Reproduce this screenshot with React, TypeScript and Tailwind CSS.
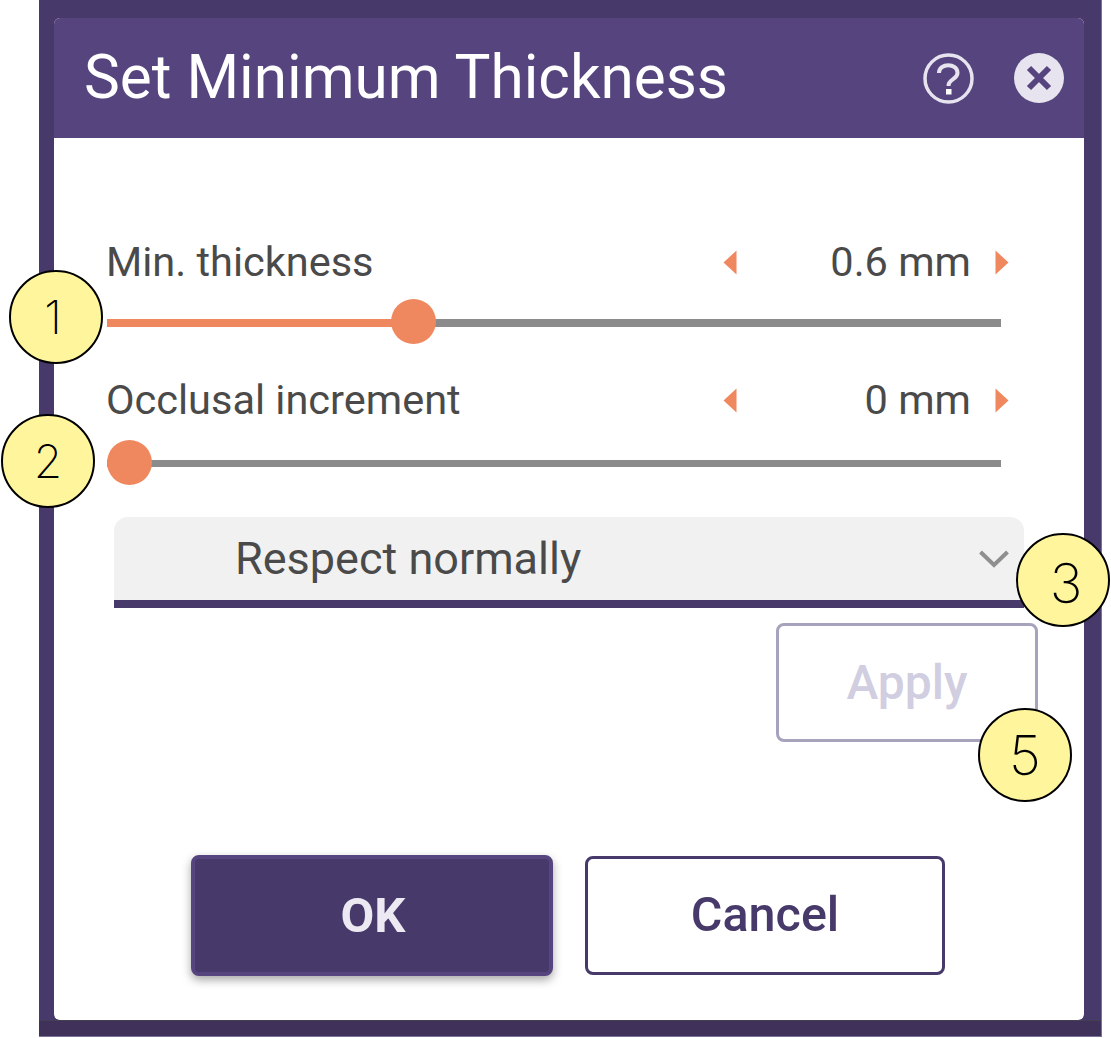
import React from 'react'

const font = { fontFamily: 'Roboto, "Liberation Sans", sans-serif' }

function LeftArrow() {
  return (
    <svg width="15" height="25" viewBox="0 0 15 25" className="block shrink-0">
      <path d="M0.5 12.5 L13.5 0.5 V24.5 Z" fill="#f0885f" />
    </svg>
  )
}

function RightArrow() {
  return (
    <svg width="14" height="25" viewBox="0 0 14 25" className="block shrink-0">
      <path d="M13.5 12.5 L0.5 0.5 V24.5 Z" fill="#f0885f" />
    </svg>
  )
}

function ValueRow({ label, value }: { label: string; value: string }) {
  return (
    <div className="flex h-[44px] w-[902px] items-center text-[41.5px] leading-[44px] text-[#4a4a4a]">
      <div className="-ml-px flex-1 whitespace-nowrap">{label}</div>
      <LeftArrow />
      <div className="w-[233px] whitespace-nowrap text-right">{value}</div>
      <div className="ml-[24px]">
        <RightArrow />
      </div>
    </div>
  )
}

function Slider({ percent, thick }: { percent: number; thick: string }) {
  return (
    <div className="relative h-[45px] w-[894px]">
      <div className={`absolute left-0 right-0 bg-[#8b8b8b] ${thick}`} />
      <div className={`absolute left-0 bg-[#f0885f] ${thick}`} style={{ width: `${percent}%` }} />
      <div
        className="absolute top-0 h-[45px] w-[45px] rounded-full bg-[#f0885f]"
        style={{ left: `calc(${percent}% - ${percent === 0 ? 0 : 22}px)` }}
      />
    </div>
  )
}

function Callout({ n, className }: { n: string; className: string }) {
  return (
    <div
      className={`absolute flex h-[94px] w-[94px] items-center justify-center rounded-full border-2 border-black bg-[#fff59d] font-extralight leading-none text-black ${className}`}
      style={{ fontFamily: 'Inter, Lato, sans-serif' }}
    >
      {n}
    </div>
  )
}

export default function App() {
  return (
    <div className="relative h-[1038px] w-[1111px] overflow-hidden bg-white" style={font}>
      <div className="ml-[39px] flex h-[1037px] w-[1063px] flex-col border-b border-r border-[#7d7299] bg-[#47396a]">
        <div className="flex-1 pl-[15px] pt-[18px]">
          <div className="h-[1002px] w-[1030px] overflow-hidden rounded-[6px] bg-white">
            <div className="flex h-[120px] items-center bg-[#56447e] pl-[30px] pr-[20px] text-white">
              <div className="whitespace-nowrap text-[60.3px] leading-none">Set Minimum Thickness</div>
              <div className="ml-auto flex items-center gap-[40px]">
                <svg width="51" height="51" viewBox="0 0 51 51" className="block">
                  <circle cx="25.5" cy="25.5" r="23.5" fill="none" stroke="#e7e4ef" strokeWidth="3.5" />
                  <path d="M16 20 C16 9.5 34.5 9.5 34.5 20 C34.5 26.5 25.5 26 25.5 33" fill="none" stroke="#e7e4ef" strokeWidth="4" />
                  <rect x="23" y="36" width="5.5" height="5.5" fill="#ffffff" />
                </svg>
                <svg width="50" height="50" viewBox="0 0 50 50" className="block">
                  <circle cx="25" cy="25" r="25" fill="#e7e4ef" />
                  <path d="M15 15 L35 35 M35 15 L15 35" stroke="#56447e" strokeWidth="6" />
                </svg>
              </div>
            </div>

            <div className="pl-[53px] pt-[102px]">
              <ValueRow label="Min. thickness" value="0.6 mm" />
              <div className="mt-[15px]">
                <Slider percent={34.2} thick="top-[20px] h-[8px]" />
              </div>
              <div className="mt-[34px]">
                <ValueRow label="Occlusal increment" value="0 mm" />
              </div>
              <div className="mt-[18px]">
                <Slider percent={0} thick="top-[20px] h-[7px]" />
              </div>
            </div>

            <div className="ml-[60px] mt-[32px] flex h-[91px] w-[910px] items-center rounded-t-[14px] border-b-[8px] border-[#47396a] bg-[#f1f1f1] pl-[121px] pr-[15px] text-[45px] text-[#4a4a4a]">
              <div className="flex-1 whitespace-nowrap">Respect normally</div>
              <svg width="30" height="20" viewBox="0 0 30 20" className="block">
                <path d="M1.5 3 L15 16 L28.5 3" fill="none" stroke="#8f8f8f" strokeWidth="4" />
              </svg>
            </div>

            <div className="mr-[46px] mt-[15px] flex justify-end">
              <div className="flex h-[119px] w-[262px] items-center justify-center rounded-[8px] border-[3px] border-[#a8a3bd] text-[48px] font-medium text-[#d0cee0]">
                Apply
              </div>
            </div>

            <div className="ml-[137px] mt-[113px] flex items-center gap-[32px]">
              <div className="flex h-[121px] w-[362px] items-center justify-center rounded-[8px] border-[4px] border-[#56447e] bg-[#47396a] pl-[2px] text-[49px] font-bold text-[#ece9f3] shadow-[0_4px_10px_rgba(0,0,0,0.35)]">
                OK
              </div>
              <div className="flex h-[119px] w-[360px] items-center justify-center rounded-[8px] border-[3px] border-[#47396a] text-[48.5px] font-medium text-[#47396a]">
                Cancel
              </div>
            </div>
          </div>
        </div>
        <div className="h-[16px] border-t border-[#444050] bg-[#3f3159]" />
      </div>

      <Callout n="1" className="left-[9px] top-[270px] pr-[6px] text-[46px]" />
      <Callout n="2" className="left-[1px] top-[414px] text-[46px]" />
      <Callout n="3" className="left-[1016px] top-[533px] pl-[6px] pt-[6px] text-[55px]" />
      <Callout n="5" className="left-[978px] top-[708px] text-[55px]" />
    </div>
  )
}
